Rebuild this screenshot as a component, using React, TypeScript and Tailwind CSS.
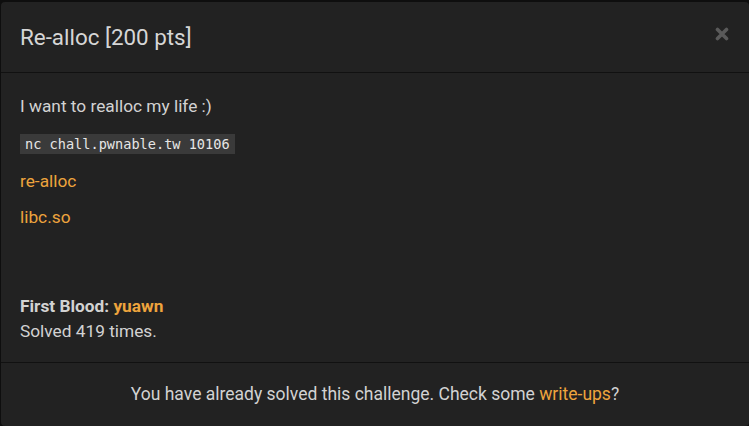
export default function App() {
  return (
    <div className="w-[749px] h-[426px] bg-[#0e0e0e] pt-[2px] pl-[1px] overflow-hidden" style={{ fontFamily: "Roboto, 'Liberation Sans', sans-serif" }}>
      <div className="w-[748px] h-[424px] bg-[#222222] rounded-[4px] flex flex-col text-[#d2d2d2]">
        <div className="h-[71px] flex items-center justify-between pl-[19px] pr-[20px] border-b border-[#111]">
          <h4 className="text-[22.4px] leading-none text-[#d6d6d6]">Re-alloc [200 pts]</h4>
          <svg width="14" height="14" viewBox="0 0 14 14" className="-mt-[7px]">
            <path d="M2.5 2.5 L11.5 11.5 M11.5 2.5 L2.5 11.5" stroke="#5a5a5a" strokeWidth="3.6" strokeLinecap="round" />
          </svg>
        </div>
        <div className="h-[290px] pl-[19px] pt-[22px] border-b border-[#111] text-[17.3px]">
          <p className="leading-[22px]">I want to realloc my life :)</p>
          <div className="mt-[17px] leading-none">
            <code className="inline-block bg-[#3a3a3a] text-[#e6e6e6] px-[5px] h-[20px] leading-[20px] text-[13.6px]" style={{ fontFamily: "'DejaVu Sans Mono', monospace" }}>nc chall.pwnable.tw 10106</code>
          </div>
          <p className="mt-[16px] leading-[22px] text-[#eea43d]">re-alloc</p>
          <p className="mt-[14px] leading-[22px] text-[#eea43d]">libc.so</p>
          <p className="mt-[67px] leading-[22px] font-bold">First Blood: <span className="text-[#eea43d]">yuawn</span></p>
          <p className="mt-[2px] leading-[24px]">Solved 419 times.</p>
        </div>
        <div className="flex-1 flex items-center justify-center text-[17.5px] pb-[1px]">
          <p>You have already solved this challenge. Check some <span className="text-[#eea43d]">write-ups</span>?</p>
        </div>
      </div>
    </div>
  );
}
